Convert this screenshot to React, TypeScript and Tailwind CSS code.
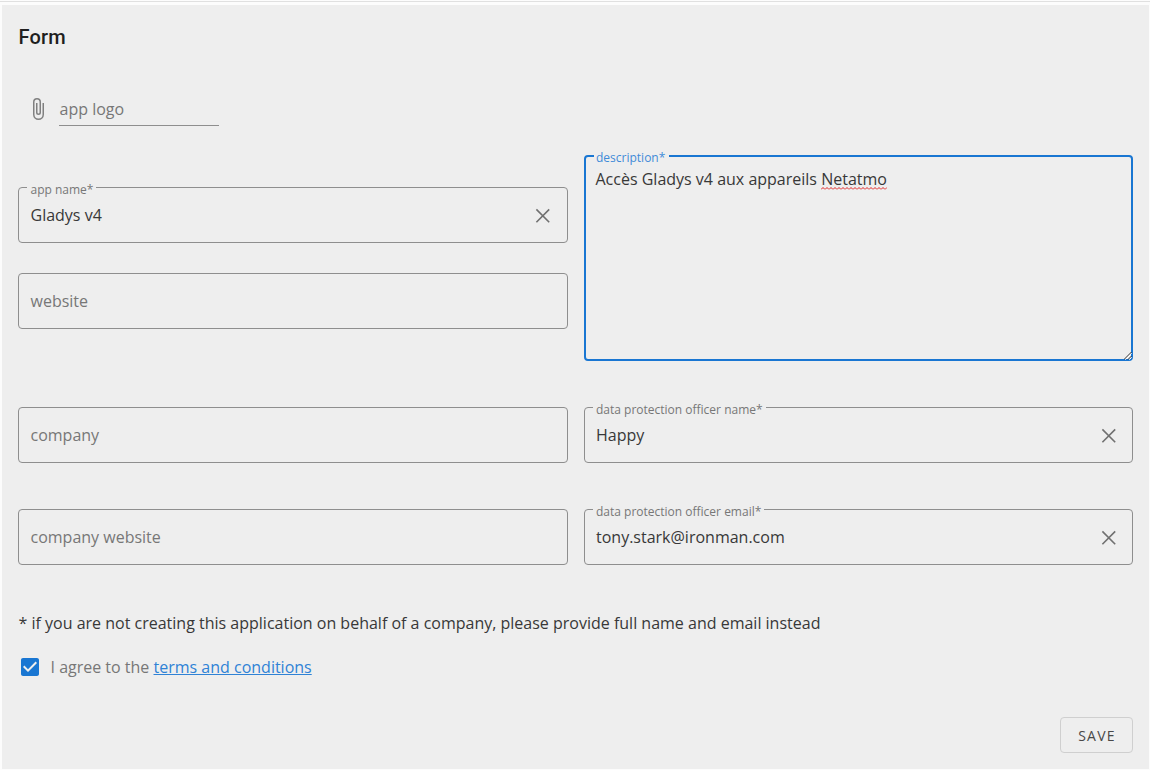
import type { ReactNode } from "react";

function ClearIcon() {
  return (
    <svg viewBox="0 0 24 24" className="mt-[2px] mr-[11.5px] size-6" fill="none" stroke="#707070" strokeWidth="1.6">
      <path d="M5.4 5.4L18.2 18.2M18.2 5.4L5.4 18.2" />
    </svg>
  );
}

function FloatingLabel({ children, active = false }: { children: ReactNode; active?: boolean }) {
  return (
    <span
      className={
        active
          ? "absolute -top-[8px] left-[8px] bg-[#eeeeee] pr-1 pl-[2.5px] text-xs leading-[17px] whitespace-nowrap text-[#3f8bd8]"
          : "absolute -top-[7px] left-[8px] bg-[#eeeeee] pr-[3px] pl-[3.5px] text-xs leading-[17px] whitespace-nowrap text-[#777777]"
      }
    >
      {children}
    </span>
  );
}

function Field({ label, value }: { label: string; value?: string }) {
  return (
    <div className="relative flex h-14 items-center justify-between rounded border border-[#8e8e8e] pl-[11.5px]">
      {value ? (
        <>
          <FloatingLabel>{label}</FloatingLabel>
          <span className="text-[#383838]">{value}</span>
          <ClearIcon />
        </>
      ) : (
        <span className="text-[#777777]">{label}</span>
      )}
    </div>
  );
}

export default function App() {
  return (
    <div className="h-[770px] w-[1150px] bg-[#fcfcfc] pt-px font-['Open_Sans',sans-serif] text-base leading-6 font-normal">
      <div className="h-px bg-[#e0e0e0]" />
      <main className="mt-[3px] ml-[2px] flex h-[764px] w-[1147px] flex-col bg-[#eeeeee] px-4">
        <h1 className="mt-[19px] pl-[0.5px] font-[Roboto,sans-serif] text-xl leading-[26px] font-medium tracking-[0.2px] text-[#1f1f1f]">
          Form
        </h1>

        <div className="mt-[39px] flex h-8 items-start">
          <svg viewBox="0 0 24 24" className="mt-2 ml-2 size-6 text-[#808080]" fill="currentColor">
            <path d="M16.5,6V17.5A4,4 0 0,1 12.5,21.5A4,4 0 0,1 8.5,17.5V5A2.5,2.5 0 0,1 11,2.5A2.5,2.5 0 0,1 13.5,5V15.5A1,1 0 0,1 12.5,16.5A1,1 0 0,1 11.5,15.5V6H10V15.5A2.5,2.5 0 0,0 12.5,18A2.5,2.5 0 0,0 15,15.5V5A4,4 0 0,0 11,1A4,4 0 0,0 7,5V17.5A5.5,5.5 0 0,0 12.5,23A5.5,5.5 0 0,0 18,17.5V6H16.5Z" />
          </svg>
          <div className="ml-[9px] h-[37px] w-40 border-b border-[#8e8e8e] pt-2 pl-[0.5px] text-[#777777]">app logo</div>
        </div>

        <div className="mt-[34px] grid grid-cols-2 gap-x-4">
          <div className="flex flex-col gap-[30px] pt-8">
            <Field label="app name*" value="Gladys v4" />
            <Field label="website" />
          </div>
          <div className="relative h-[206px] rounded border-2 border-[#1976d2] pt-[10px] pl-[10px] text-[#383838]">
            <FloatingLabel active>description*</FloatingLabel>
            Accès Gladys v4 aux appareils{" "}
            <span className="relative inline-block">
              Netatmo
              <svg className="absolute top-[20px] left-0 h-[3px] w-full" fill="none" stroke="#e02020" strokeWidth="1">
                <defs>
                  <pattern id="wave" width="4" height="3" patternUnits="userSpaceOnUse">
                    <path d="M0 2.5L2 .5L4 2.5" />
                  </pattern>
                </defs>
                <rect width="100%" height="3" fill="url(#wave)" stroke="none" />
              </svg>
            </span>
            <svg viewBox="0 0 8 8" className="absolute -right-px -bottom-px size-2" fill="none">
              <path d="M1.3 7.7L7.7 1.3M5.3 7.7L7.7 5.3" stroke="#ffffff" />
              <path d="M0 7.5L7.5 0M4 7.5L7.5 4" stroke="#333333" />
            </svg>
          </div>
        </div>

        <div className="mt-[46px] grid grid-cols-2 gap-x-4 gap-y-[46px]">
          <Field label="company" />
          <Field label="data protection officer name*" value="Happy" />
          <Field label="company website" />
          <Field label="data protection officer email*" value="tony.stark@ironman.com" />
        </div>

        <p className="mt-[46px] pl-[0.5px] text-[#383838]">
          * if you are not creating this application on behalf of a company, please provide full name and email instead
        </p>

        <div className="mt-5 flex items-center text-[#777777]">
          <svg viewBox="0 0 24 24" className="size-6 text-[#1976d2]" fill="currentColor">
            <path d="M10,17L5,12L6.41,10.58L10,14.17L17.59,6.58L19,8M19,3H5C3.89,3 3,3.89 3,5V19C3,20.1 3.9,21 5,21H19C20.1,21 21,20.1 21,19V5C21,3.89 20.1,3 19,3Z" />
          </svg>
          <span className="ml-[8.5px] whitespace-pre">I agree to the </span>
          <a href="#terms" className="text-[#2f82d6] underline">
            terms and conditions
          </a>
        </div>

        <button className="mt-[38px] h-9 w-[73px] self-end rounded border border-[#cfcfcf] pt-px pl-px text-sm font-normal tracking-[1.25px] text-[#484848]">
          SAVE
        </button>
      </main>
    </div>
  );
}
